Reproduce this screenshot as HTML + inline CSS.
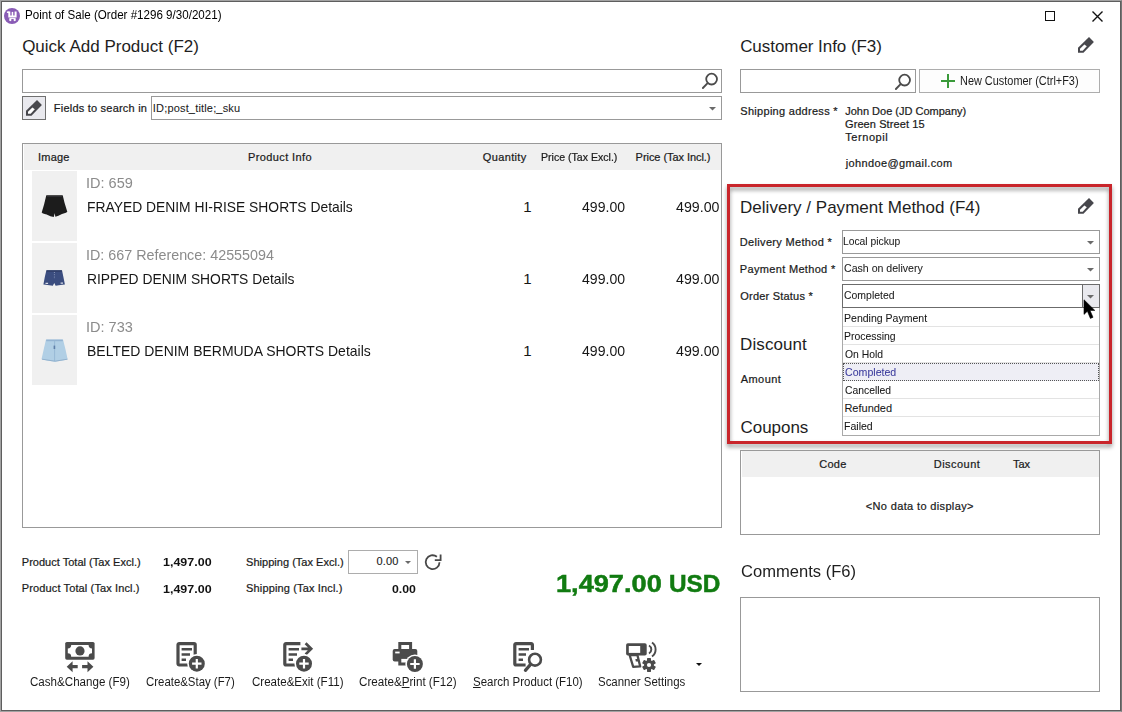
<!DOCTYPE html>
<html lang="en"><head><meta charset="utf-8"><title>Point of Sale</title>
<style>
html,body{margin:0;padding:0;background:#fff;}
body{width:1122px;height:712px;overflow:hidden;font-family:"Liberation Sans",sans-serif;}
#win{position:absolute;left:0;top:0;width:1122px;height:712px;background:#fff;overflow:hidden;}
#win>*{position:absolute;box-sizing:border-box;}
.t{white-space:nowrap;margin:0;padding:0;transform-origin:0 50%;}
.t u{text-decoration:underline;text-underline-offset:1px;}
.b{border:1px solid #999;background:#fff;}
.hdr{background:#f0f0f0;}
.img{background:#f0f0f0;}
.sep{background:#e3e3e3;height:1px;}
svg{overflow:visible;}

</style></head>
<body>
<div id="win">
<!-- window frame -->
<div style="left:0;top:0;width:1122px;height:712px;border:1px solid #a2a2a2;border-right-color:#767676;"></div>
<div style="left:1px;top:1px;width:1120px;height:710px;border:1px solid #5e5e5e;"></div>
<!-- title icon -->
<svg style="left:4px;top:8px" width="16" height="16" viewBox="0 0 16 16"><circle cx="8" cy="8" r="8" fill="#8a5cb6"/><path d="M2.9 4.2H5.2" stroke="#fff" stroke-width="1.5"/><path d="M5.3 3.5V8.4H11.6V3.5" stroke="#fff" stroke-width="2" fill="none"/><path d="M8.45 3.9V8" stroke="#fff" stroke-width="1.5"/><path d="M5.4 10.5H11.6" stroke="#fff" stroke-width=".9"/><circle cx="6.3" cy="12" r="1.15" fill="#fff"/><circle cx="10.7" cy="12" r="1.15" fill="#fff"/></svg>
<!-- window buttons -->
<div style="left:1045px;top:11px;width:10px;height:10px;border:1px solid #111;"></div>
<svg style="left:1092px;top:11px" width="11" height="11" viewBox="0 0 11 11"><path d="M.5 .5L10.5 10.5M10.5 .5L.5 10.5" stroke="#111" stroke-width="1.4" fill="none"/></svg>

<!-- search input -->
<div class="b" style="left:22px;top:69px;width:700px;height:24px;"></div>
<svg style="left:701px;top:72px" width="18" height="18" viewBox="0 0 18 18"><circle cx="10.6" cy="7.1" r="5.4" stroke="#4a4a4a" stroke-width="1.8" fill="none"/><path d="M6.6 11.2L1.9 16" stroke="#4d4d4d" stroke-width="1.9" stroke-linecap="round"/></svg>
<!-- pencil button -->
<div style="left:22px;top:96px;width:24px;height:24px;border:1px solid #707070;background:#e9e9ee;"></div>
<svg style="left:25px;top:100.3px" width="18" height="16" viewBox="0 0 18 16"><path d="M12 .1L16.9 4.9L6.5 15.8H1V10.7z" fill="#47474c"/><path d="M7.4 7.4L9.8 9.2L5.7 13.8H3V11.8z" fill="#fff"/></svg>
<!-- fields combo -->
<div class="b" style="left:151px;top:96px;width:571px;height:24px;"></div>
<svg style="left:709px;top:107px" width="7" height="4" viewBox="0 0 7 4"><path d="M0 0h7L3.5 3.6z" fill="#6a6a6a"/></svg>

<!-- product table -->
<div class="b" style="left:22px;top:143px;width:700px;height:385px;"></div>
<div class="hdr" style="left:24px;top:144px;width:696.6px;height:26px;"></div>
<div class="img" style="left:31.8px;top:171.4px;width:45px;height:69.4px;"></div>
<div class="img" style="left:31.8px;top:243.4px;width:45px;height:69.4px;"></div>
<div class="img" style="left:31.8px;top:315.4px;width:45px;height:69.4px;"></div>
<svg style="left:32px;top:171px" width="45" height="214" viewBox="32 171 45 214">
<filter id="bl" x="-20%" y="-20%" width="140%" height="140%"><feGaussianBlur stdDeviation=".45"/></filter>
<g filter="url(#bl)">
<path d="M46.3 195.2L62.7 195.2L64.6 203L67.3 211.8L66 212.8L62 214L58.4 215.8L55.4 216.8L54.6 213.2L53.8 216.9L50.4 216.2L46.6 214.4L43 213.6L41.7 212.4L44.2 204z" fill="#1d1d1e"/>
<path d="M47 196.3H62" stroke="#3a3a3c" stroke-width=".8"/>
<path d="M46.4 270.2L62 270.2L63.4 277L64.9 284.4L60.5 285L55.6 285.7L54.3 283L52.8 285.7L47.5 285L43.4 284.5L44.8 277z" fill="#3b4d7f"/>
<path d="M46.6 271H61.8" stroke="#2a375f" stroke-width="1.2"/>
<path d="M54.4 272v7" stroke="#9aa6c4" stroke-width=".9" stroke-dasharray=".9 1.4"/>
<path d="M45.5 283.4h2.6M60.6 283.2h2.4" stroke="#d9dde8" stroke-width="1.3"/>
<path d="M46 339.4L63 339.4L65.4 349L67.7 359.4L61 360.8L55 361.7L48 360.8L41.5 359.3L43.8 349z" fill="#b1cfe5"/>
<path d="M46.2 340.4H62.8" stroke="#94b4d2" stroke-width="1.6"/>
<path d="M54.6 341V361" stroke="#98b9d6" stroke-width="1"/>
<path d="M54.4 345.6v3.4" stroke="#5f7fa8" stroke-width="1.6"/>
<path d="M42 359.2L55 361.2L67.4 359.2" stroke="#8eaecb" stroke-width=".9" fill="none"/>
</g>
</svg>

<!-- customer -->
<svg style="left:1077px;top:37px" width="18" height="16" viewBox="0 0 18 16"><path d="M12 .1L16.9 4.9L6.5 15.8H1V10.7z" fill="#47474c"/><path d="M7.4 7.4L9.8 9.2L5.7 13.8H3V11.8z" fill="#fff"/></svg>
<div class="b" style="left:740px;top:69px;width:176px;height:24px;"></div>
<svg style="left:894px;top:73px" width="18" height="18" viewBox="0 0 18 18"><circle cx="10.6" cy="7.1" r="5.4" stroke="#4a4a4a" stroke-width="1.8" fill="none"/><path d="M6.6 11.2L1.9 16" stroke="#4d4d4d" stroke-width="1.9" stroke-linecap="round"/></svg>
<div style="left:919px;top:69px;width:181px;height:24px;border:1px solid #adadad;background:#fdfdfd;"></div>
<svg style="left:941px;top:74px" width="14" height="14" viewBox="0 0 14 14"><path d="M7 0v14M0 7h14" stroke="#3a9a3a" stroke-width="2"/></svg>

<!-- red highlight box -->
<div style="left:727px;top:184px;width:385px;height:260px;border:3px solid #c9252b;filter:drop-shadow(.5px 3px 2px rgba(0,0,0,.42));"></div>
<svg style="left:1077px;top:198.3px" width="18" height="16" viewBox="0 0 18 16"><path d="M12 .1L16.9 4.9L6.5 15.8H1V10.7z" fill="#47474c"/><path d="M7.4 7.4L9.8 9.2L5.7 13.8H3V11.8z" fill="#fff"/></svg>
<!-- combos -->
<div class="b" style="left:842px;top:230px;width:258px;height:24px;"></div>
<svg style="left:1087px;top:241px" width="7" height="4" viewBox="0 0 7 4"><path d="M0 0h7L3.5 3.6z" fill="#6a6a6a"/></svg>
<div class="b" style="left:842px;top:257px;width:258px;height:24px;"></div>
<svg style="left:1087px;top:268px" width="7" height="4" viewBox="0 0 7 4"><path d="M0 0h7L3.5 3.6z" fill="#6a6a6a"/></svg>
<div style="left:842px;top:284px;width:258px;height:24px;border:1px solid #6b6b6b;background:#fff;"></div>
<div style="left:1082px;top:284px;width:18px;height:24px;border:1px solid #6b6b6b;background:#e9e9ee;"></div>
<svg style="left:1087px;top:295px" width="7" height="4" viewBox="0 0 7 4"><path d="M0 0h7L3.5 3.6z" fill="#6a6a6a"/></svg>
<!-- dropdown list -->
<div style="left:842px;top:307px;width:258px;height:129px;border:1px solid #a9a9a9;background:#fff;"></div>
<div class="sep" style="left:843px;top:326px;width:256px;"></div>
<div class="sep" style="left:843px;top:344px;width:256px;"></div>
<div class="sep" style="left:843px;top:362px;width:256px;"></div>
<div class="sep" style="left:843px;top:380px;width:256px;"></div>
<div class="sep" style="left:843px;top:398px;width:256px;"></div>
<div class="sep" style="left:843px;top:416px;width:256px;"></div>
<div style="left:843px;top:363px;width:256px;height:18px;background:#eeeef5;border:1px dotted #555;"></div>
<div style="left:842px;top:307px;width:258px;height:1px;background:#6b6b6b;"></div>
<!-- cursor -->
<svg style="left:1083px;top:299px" width="14" height="21" viewBox="0 0 14 21"><path d="M1 .8V15.4L4.4 12.2L7.4 19.4L10 18.3L7 11.4H11.8z" fill="#000" stroke="#000" stroke-width=".6" stroke-linejoin="round"/></svg>

<!-- coupons table -->
<div class="b" style="left:740px;top:450px;width:360px;height:85px;"></div>
<div class="hdr" style="left:742px;top:451px;width:356.6px;height:26px;"></div>
<!-- comments -->
<div class="b" style="left:740px;top:597px;width:360px;height:95px;"></div>

<!-- shipping spin -->
<div class="b" style="left:348px;top:550px;width:70px;height:24px;border-color:#adadad"></div>
<svg style="left:405px;top:561px" width="6" height="3" viewBox="0 0 6 3"><path d="M0 0h6L3 3z" fill="#6a6a6a"/></svg>
<svg style="left:424px;top:553px" width="19" height="19" viewBox="0 0 19 19"><path d="M15.5 9.2A6.9 6.9 0 1 1 12.9 3.8" stroke="#474747" stroke-width="1.8" fill="none"/><path d="M10.8 7.2H16.6V1.4" stroke="#474747" stroke-width="1.8" fill="none"/></svg>
<!-- small black arrow -->
<svg style="left:696px;top:663px" width="6" height="3" viewBox="0 0 6 3"><path d="M0 0h6L3 3z" fill="#111"/></svg>
<!-- bottom toolbar icons -->
<svg style="left:65px;top:642px" width="30" height="30" viewBox="0 0 30 30">
<rect x=".2" y="0" width="29.4" height="17.7" rx="1.6" fill="#4b4b4b"/>
<path d="M6.2 3H23.6A3.4 3.4 0 0 0 27 6.4V11.3A3.4 3.4 0 0 0 23.6 14.7H6.2A3.4 3.4 0 0 0 2.8 11.3V6.4A3.4 3.4 0 0 0 6.2 3z" fill="#fff"/>
<circle cx="15" cy="8.9" r="4.6" fill="#4b4b4b"/>
<path d="M1.7 24.7L7.6 19.2V23.1H12.7V26.3H7.6V30.2z" fill="#4b4b4b"/>
<path d="M28.4 24.7L22.5 19.2V23.1H17.1V26.3H22.5V30.2z" fill="#4b4b4b"/>
</svg>
<svg style="left:176px;top:642px" width="30" height="30" viewBox="0 0 30 30">
<rect x="2" y="1.6" width="17.2" height="21.4" rx="1.2" fill="#fff" stroke="#4b4b4b" stroke-width="3.2"/>
<path d="M5.6 7.3H16M5.6 12.5H14M5.6 17.7H10" stroke="#4b4b4b" stroke-width="2.6"/>
<circle cx="20.8" cy="21.7" r="9.6" fill="#fff"/><circle cx="20.8" cy="21.7" r="8" fill="#4b4b4b"/>
<path d="M20.8 17V26.4M16.1 21.7H25.5" stroke="#fff" stroke-width="2.2"/>
</svg>
<svg style="left:283px;top:642px" width="30" height="30" viewBox="0 0 30 30">
<path d="M17.4 1.6H3A1.2 1.2 0 0 0 1.8 2.8V21.8A1.2 1.2 0 0 0 3 23H13" fill="none" stroke="#4b4b4b" stroke-width="3.2"/>
<path d="M5.6 7.3H16M5.6 12.5H14M5.6 17.7H10" stroke="#4b4b4b" stroke-width="2.6"/>
<path d="M18.4 6.8H27.6M22.6 1.2L28.2 6.8L22.6 12.4" fill="none" stroke="#4b4b4b" stroke-width="2.7"/>
<circle cx="21" cy="21.7" r="9.6" fill="#fff"/><circle cx="21" cy="21.7" r="8" fill="#4b4b4b"/>
<path d="M21 17V26.4M16.3 21.7H25.7" stroke="#fff" stroke-width="2.2"/>
</svg>
<svg style="left:393px;top:642px" width="31" height="31" viewBox="0 0 31 31">
<rect x="6.8" y="1.5" width="10.8" height="8" fill="#fff" stroke="#4b4b4b" stroke-width="3"/>
<rect x="-.3" y="7" width="24.6" height="12.4" rx="2" fill="#4b4b4b"/>
<rect x="2.2" y="9.6" width="4.4" height="1.8" fill="#fff"/>
<rect x="6.8" y="15.4" width="10.8" height="6.6" fill="#fff" stroke="#4b4b4b" stroke-width="3"/>
<circle cx="21.9" cy="22" r="9.6" fill="#fff"/><circle cx="21.9" cy="22" r="8" fill="#4b4b4b"/>
<path d="M21.9 17.3V26.7M17.2 22H26.6" stroke="#fff" stroke-width="2.2"/>
</svg>
<svg style="left:513px;top:642px" width="30" height="30" viewBox="0 0 30 30">
<path d="M19.4 8V2.8A1.2 1.2 0 0 0 18.2 1.6H3A1.2 1.2 0 0 0 1.8 2.8V21.8A1.2 1.2 0 0 0 3 23H12.6" fill="none" stroke="#4b4b4b" stroke-width="3.2"/>
<path d="M5.6 7.3H16M5.6 12.5H13M5.6 17.7H10" stroke="#4b4b4b" stroke-width="2.6"/>
<circle cx="22" cy="17.7" r="8.4" fill="#fff"/>
<circle cx="22" cy="17.7" r="5.9" fill="#fff" stroke="#4b4b4b" stroke-width="2.6"/>
<path d="M17.6 22.4L12.4 28.4" stroke="#4b4b4b" stroke-width="3.2" stroke-linecap="round"/>
</svg>
<svg style="left:626px;top:642px" width="31" height="31" viewBox="0 0 31 31">
<rect x=".1" y="1.3" width="20.6" height="12.3" rx="1.8" fill="#4b4b4b"/>
<rect x="2.8" y="4" width="11.4" height="6.9" fill="#fff"/>
<path d="M3.6 13H11.4L14.2 24.4L7.2 24.9z" fill="#fff" stroke="#4b4b4b" stroke-width="2.3" stroke-linejoin="round"/>
<path d="M9.4 17H12.2V19.4H9.8z" fill="#4b4b4b"/>
<path d="M23 3.5A4.6 4.6 0 0 1 23 11.5M26 .4A8.6 8.6 0 0 1 26 14.4" fill="none" stroke="#4b4b4b" stroke-width="1.9"/>
<g transform="translate(23 23)" fill="#4b4b4b">
<circle r="4.9"/>
<rect x="-2" y="-6.9" width="4" height="13.8" rx=".6"/>
<rect x="-2" y="-6.9" width="4" height="13.8" rx=".6" transform="rotate(60)"/>
<rect x="-2" y="-6.9" width="4" height="13.8" rx=".6" transform="rotate(120)"/>
<circle r="2.1" fill="#fff"/>
</g>
</svg>

<div class="t" style="left:25.13px;top:8px;font-size:12px;line-height:14px;transform:scaleX(0.9660);color:#000">Point of Sale (Order #1296 9/30/2021)</div>
<div class="t" style="left:22.15px;top:37px;font-size:17px;line-height:19px;letter-spacing:0.005px;color:#1e1e1e">Quick Add Product (F2)</div>
<div class="t" style="left:740.15px;top:37px;font-size:17px;line-height:19px;letter-spacing:-0.053px;color:#1e1e1e">Customer Info (F3)</div>
<div class="t" style="left:740.05px;top:198px;font-size:17px;line-height:19px;letter-spacing:0.016px;color:#1e1e1e">Delivery / Payment Method (F4)</div>
<div class="t" style="left:740.05px;top:335px;font-size:17px;line-height:19px;letter-spacing:0.093px;color:#1e1e1e">Discount</div>
<div class="t" style="left:740.55px;top:418px;font-size:17px;line-height:19px;letter-spacing:-0.042px;color:#1e1e1e">Coupons</div>
<div class="t" style="left:740.57px;top:562px;font-size:17px;line-height:19px;transform:scaleX(0.9738);color:#1e1e1e">Comments (F6)</div>
<div class="t" style="left:53.80px;top:102px;font-size:11px;line-height:12px;letter-spacing:0.217px;color:#1b1b1b;-webkit-text-stroke:0.22px">Fields to search in</div>
<div class="t" style="left:152.80px;top:102px;font-size:11px;line-height:12px;letter-spacing:0.174px;color:#1b1b1b;-webkit-text-stroke:0.06px">ID;post_title;_sku</div>
<div class="t" style="left:740.30px;top:105px;font-size:11px;line-height:12px;letter-spacing:0.291px;color:#1b1b1b;-webkit-text-stroke:0.22px">Shipping address *</div>
<div class="t" style="left:845.25px;top:105px;font-size:11px;line-height:12px;letter-spacing:-0.007px;color:#1b1b1b;-webkit-text-stroke:0.22px">John Doe (JD Company)</div>
<div class="t" style="left:845.00px;top:118px;font-size:11px;line-height:12px;letter-spacing:0.089px;color:#1b1b1b;-webkit-text-stroke:0.22px">Green Street 15</div>
<div class="t" style="left:845.25px;top:131px;font-size:11px;line-height:12px;letter-spacing:0.571px;color:#1b1b1b;-webkit-text-stroke:0.22px">Ternopil</div>
<div class="t" style="left:845.75px;top:157px;font-size:11px;line-height:12px;letter-spacing:0.375px;color:#1b1b1b;-webkit-text-stroke:0.22px">johndoe@gmail.com</div>
<div class="t" style="left:959.99px;top:74px;font-size:12px;line-height:14px;transform:scaleX(0.9095);color:#1b1b1b">New Customer (Ctrl+F3)</div>
<div class="t" style="left:38.10px;top:151px;font-size:11px;line-height:12px;letter-spacing:0.175px;color:#1b1b1b;-webkit-text-stroke:0.22px">Image</div>
<div class="t" style="left:248.10px;top:151px;font-size:11px;line-height:12px;letter-spacing:0.382px;color:#1b1b1b;-webkit-text-stroke:0.22px">Product Info</div>
<div class="t" style="left:482.80px;top:151px;font-size:11px;line-height:12px;letter-spacing:0.357px;color:#1b1b1b;-webkit-text-stroke:0.22px">Quantity</div>
<div class="t" style="left:541.34px;top:151px;font-size:11px;line-height:12px;transform:scaleX(0.9608);color:#1b1b1b;-webkit-text-stroke:0.22px">Price (Tax Excl.)</div>
<div class="t" style="left:635.60px;top:151px;font-size:11px;line-height:12px;letter-spacing:-0.053px;color:#1b1b1b;-webkit-text-stroke:0.22px">Price (Tax Incl.)</div>
<div class="t" style="left:86.29px;top:174px;font-size:15px;line-height:17px;transform:scaleX(0.9677);color:#8b8b8b">ID: 659</div>
<div class="t" style="left:86.75px;top:198px;font-size:15px;line-height:17px;transform:scaleX(0.9234);color:#161616">FRAYED DENIM HI-RISE SHORTS Details</div>
<div class="t" style="left:523.30px;top:198px;font-size:15px;line-height:17px;letter-spacing:0.000px;color:#161616">1</div>
<div class="t" style="left:582.07px;top:198px;font-size:15px;line-height:17px;transform:scaleX(0.9378);color:#161616">499.00</div>
<div class="t" style="left:675.86px;top:198px;font-size:15px;line-height:17px;transform:scaleX(0.9467);color:#161616">499.00</div>
<div class="t" style="left:86.31px;top:246px;font-size:15px;line-height:17px;transform:scaleX(0.9549);color:#8b8b8b">ID: 667 Reference: 42555094</div>
<div class="t" style="left:86.75px;top:270px;font-size:15px;line-height:17px;transform:scaleX(0.9233);color:#161616">RIPPED DENIM SHORTS Details</div>
<div class="t" style="left:523.30px;top:270px;font-size:15px;line-height:17px;letter-spacing:0.000px;color:#161616">1</div>
<div class="t" style="left:582.07px;top:270px;font-size:15px;line-height:17px;transform:scaleX(0.9378);color:#161616">499.00</div>
<div class="t" style="left:675.86px;top:270px;font-size:15px;line-height:17px;transform:scaleX(0.9467);color:#161616">499.00</div>
<div class="t" style="left:86.29px;top:318px;font-size:15px;line-height:17px;transform:scaleX(0.9677);color:#8b8b8b">ID: 733</div>
<div class="t" style="left:86.74px;top:342px;font-size:15px;line-height:17px;transform:scaleX(0.9318);color:#161616">BELTED DENIM BERMUDA SHORTS Details</div>
<div class="t" style="left:523.30px;top:342px;font-size:15px;line-height:17px;letter-spacing:0.000px;color:#161616">1</div>
<div class="t" style="left:582.07px;top:342px;font-size:15px;line-height:17px;transform:scaleX(0.9378);color:#161616">499.00</div>
<div class="t" style="left:675.86px;top:342px;font-size:15px;line-height:17px;transform:scaleX(0.9467);color:#161616">499.00</div>
<div class="t" style="left:739.80px;top:236px;font-size:11px;line-height:12px;letter-spacing:0.328px;color:#1b1b1b;-webkit-text-stroke:0.22px">Delivery Method *</div>
<div class="t" style="left:739.80px;top:263px;font-size:11px;line-height:12px;letter-spacing:0.330px;color:#1b1b1b;-webkit-text-stroke:0.22px">Payment Method *</div>
<div class="t" style="left:740.30px;top:290px;font-size:11px;line-height:12px;letter-spacing:0.208px;color:#1b1b1b;-webkit-text-stroke:0.22px">Order Status *</div>
<div class="t" style="left:843.36px;top:235px;font-size:11px;line-height:12px;transform:scaleX(0.9372);color:#1b1b1b;-webkit-text-stroke:0.06px">Local pickup</div>
<div class="t" style="left:844.12px;top:262px;font-size:11px;line-height:12px;transform:scaleX(0.9620);color:#1b1b1b;-webkit-text-stroke:0.06px">Cash on delivery</div>
<div class="t" style="left:844.12px;top:289px;font-size:11px;line-height:12px;transform:scaleX(0.9500);color:#1b1b1b;-webkit-text-stroke:0.06px">Completed</div>
<div class="t" style="left:844.44px;top:312px;font-size:11px;line-height:12px;transform:scaleX(0.9574);color:#161616;-webkit-text-stroke:0.06px">Pending Payment</div>
<div class="t" style="left:844.45px;top:330px;font-size:11px;line-height:12px;transform:scaleX(0.9498);color:#161616;-webkit-text-stroke:0.06px">Processing</div>
<div class="t" style="left:844.93px;top:348px;font-size:11px;line-height:12px;transform:scaleX(0.9427);color:#161616;-webkit-text-stroke:0.06px">On Hold</div>
<div class="t" style="left:844.92px;top:366px;font-size:11px;line-height:12px;transform:scaleX(0.9635);color:#3b3b9c;-webkit-text-stroke:0.06px">Completed</div>
<div class="t" style="left:844.93px;top:384px;font-size:11px;line-height:12px;transform:scaleX(0.9403);color:#161616;-webkit-text-stroke:0.06px">Cancelled</div>
<div class="t" style="left:844.40px;top:402px;font-size:11px;line-height:12px;letter-spacing:0.000px;color:#161616;-webkit-text-stroke:0.06px">Refunded</div>
<div class="t" style="left:844.44px;top:420px;font-size:11px;line-height:12px;transform:scaleX(0.9593);color:#161616;-webkit-text-stroke:0.06px">Failed</div>
<div class="t" style="left:740.70px;top:373px;font-size:11px;line-height:12px;letter-spacing:0.460px;color:#1b1b1b;-webkit-text-stroke:0.22px">Amount</div>
<div class="t" style="left:819.30px;top:458px;font-size:11px;line-height:12px;letter-spacing:0.250px;color:#1b1b1b;-webkit-text-stroke:0.22px">Code</div>
<div class="t" style="left:933.80px;top:458px;font-size:11px;line-height:12px;letter-spacing:0.464px;color:#1b1b1b;-webkit-text-stroke:0.22px">Discount</div>
<div class="t" style="left:1013.05px;top:458px;font-size:11px;line-height:12px;letter-spacing:-0.025px;color:#1b1b1b;-webkit-text-stroke:0.22px">Tax</div>
<div class="t" style="left:865.80px;top:500px;font-size:11px;line-height:12px;letter-spacing:0.353px;color:#1b1b1b;-webkit-text-stroke:0.22px">&lt;No data to display&gt;</div>
<div class="t" style="left:21.80px;top:556px;font-size:11px;line-height:12px;letter-spacing:0.019px;color:#1b1b1b;-webkit-text-stroke:0.22px">Product Total (Tax Excl.)</div>
<div class="t" style="left:21.80px;top:582px;font-size:11px;line-height:12px;letter-spacing:0.125px;color:#1b1b1b;-webkit-text-stroke:0.22px">Product Total (Tax Incl.)</div>
<div class="t" style="left:162.79px;top:556px;font-size:11.5px;line-height:12px;transform:scaleX(1.0851);color:#111;font-weight:700">1,497.00</div>
<div class="t" style="left:162.79px;top:583px;font-size:11.5px;line-height:12px;transform:scaleX(1.0851);color:#111;font-weight:700">1,497.00</div>
<div class="t" style="left:246.10px;top:556px;font-size:11px;line-height:12px;letter-spacing:0.021px;color:#1b1b1b;-webkit-text-stroke:0.22px">Shipping (Tax Excl.)</div>
<div class="t" style="left:246.10px;top:582px;font-size:11px;line-height:12px;letter-spacing:0.142px;color:#1b1b1b;-webkit-text-stroke:0.22px">Shipping (Tax Incl.)</div>
<div class="t" style="left:376.60px;top:555px;font-size:11px;line-height:12px;letter-spacing:0.133px;color:#1b1b1b;-webkit-text-stroke:0.12px">0.00</div>
<div class="t" style="left:392.27px;top:583px;font-size:11.5px;line-height:12px;transform:scaleX(1.0698);color:#111;font-weight:700">0.00</div>
<div class="t" style="left:555.90px;top:570px;font-size:24px;line-height:27px;transform:scaleX(1.1319);color:#117b11;font-weight:700;-webkit-text-stroke:0.5px">1,497.00</div>
<div class="t" style="left:668.98px;top:570px;font-size:24px;line-height:27px;transform:scaleX(1.0135);color:#117b11;font-weight:700;-webkit-text-stroke:0.5px">USD</div>
<div class="t" style="left:30.32px;top:675px;font-size:12px;line-height:14px;transform:scaleX(0.9653);color:#1b1b1b">Cash&amp;Change (F9)</div>
<div class="t" style="left:146.32px;top:675px;font-size:12px;line-height:14px;transform:scaleX(0.9507);color:#1b1b1b">Create&amp;Stay (F7)</div>
<div class="t" style="left:251.62px;top:675px;font-size:12px;line-height:14px;transform:scaleX(0.9617);color:#1b1b1b">Create&amp;Exit (F11)</div>
<div class="t" style="left:359.32px;top:675px;font-size:12px;line-height:14px;transform:scaleX(0.9698);color:#1b1b1b">Create&amp;<u>P</u>rint (F12)</div>
<div class="t" style="left:472.82px;top:675px;font-size:12px;line-height:14px;transform:scaleX(0.9559);color:#1b1b1b"><u>S</u>earch Product (F10)</div>
<div class="t" style="left:598.12px;top:675px;font-size:12px;line-height:14px;transform:scaleX(0.9547);color:#1b1b1b">Scanner Settings</div>
</div>
</body></html>
